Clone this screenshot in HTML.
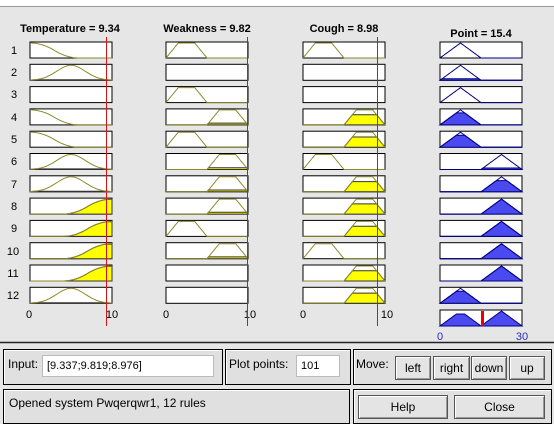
<!DOCTYPE html>
<html><head><meta charset="utf-8"><style>
body{margin:0;width:554px;height:423px;background:#e6e6e6;font-family:"Liberation Sans",Arial,sans-serif;position:relative;overflow:hidden}
.a{position:absolute}
.pan{position:absolute;border:1px solid #000;box-shadow:inset 1px 1px 0 #fff;background:#e0e0e0}
.fld{position:absolute;background:#fff;border:1px solid #bbb;font-size:11px;line-height:21px;padding-left:4px;box-sizing:border-box}
.btn{position:absolute;border:1px solid #555;background:#e4e4e4;box-shadow:inset 1px 1px 0 #fff,inset -1px -1px 0 #999;font-size:12px;text-align:center;box-sizing:border-box}
.lbl{position:absolute;font-size:12px}
</style></head><body>
<div class="a" style="left:0;top:0;width:554px;height:6px;background:#fff;border-bottom:1px solid #999"></div>
<svg id="s" class="a" style="left:0;top:0" width="554" height="345" xmlns="http://www.w3.org/2000/svg" font-family="Liberation Sans, Arial, sans-serif">
<text x="70" y="32" font-size="11" font-weight="bold" text-anchor="middle">Temperature = 9.34</text>
<text x="207" y="32" font-size="11" font-weight="bold" text-anchor="middle">Weakness = 9.82</text>
<text x="344" y="32" font-size="11" font-weight="bold" text-anchor="middle">Cough = 8.98</text>
<text x="481" y="37" font-size="11" font-weight="bold" text-anchor="middle">Point = 15.4</text>
<g font-size="11" text-anchor="middle">
<text x="14" y="54">1</text><text x="14" y="76">2</text><text x="14" y="98">3</text><text x="14" y="121">4</text><text x="14" y="143">5</text><text x="14" y="165">6</text><text x="14" y="188">7</text><text x="14" y="210">8</text><text x="14" y="232">9</text><text x="13" y="255">10</text><text x="13" y="277">11</text><text x="13" y="299">12</text>
<text x="29" y="318">0</text><text x="112" y="318">10</text>
<text x="166" y="318">0</text><text x="250" y="318">10</text>
<text x="303" y="318">0</text><text x="387" y="318">10</text>
<text x="440" y="340" fill="#2b2bbb">0</text><text x="522" y="340" fill="#2b2bbb">30</text>
</g>
<g id="g"></g>
<line x1="0" y1="342.5" x2="554" y2="342.5" stroke="#222" stroke-width="1.5"/>
</svg>
<script>
var g=document.getElementById('g'),h='';
function sm(u,a,b){if(u<=a)return 0;if(u>=b)return 1;var m=(a+b)/2;return u<m?2*Math.pow((u-a)/(b-a),2):1-2*Math.pow((u-b)/(b-a),2);}
var F={A:function(u){return 1-sm(u,0,.6)},B:function(u){return Math.exp(-Math.pow(u-.5,2)/(2*.03))},C:function(u){return sm(u,.4,1)},
D:function(u){return Math.max(0,Math.min((u)/.15,1,(.5-u)/.15))},E:function(u){return Math.max(0,Math.min((u-.5)/.15,1,(1-u)/.15))},
H:function(u){return Math.max(0,Math.min(u/.25,(.5-u)/.25))},K:function(u){return Math.max(0,Math.min((u-.5)/.25,(1-u)/.25))}};
var cols=[{x:30,mf:'ABxAABBCCCCB',f:[0,.04,0,0,0,.04,.04,.97,.97,.97,.97,.04],c:'#8a8a2a',fc:'#ffff00'},
{x:166,mf:'DxDEDEEEDExx',f:[0,0,0,.12,0,.12,.12,.12,0,.12,0,0],c:'#8a8a2a',fc:'#ffff00'},
{x:303,mf:'FxxGGFGGGFGG',f:[0,0,0,.68,.68,0,.68,.68,.68,0,.68,.68],c:'#8a8a2a',fc:'#ffff00'},
{x:440,mf:'HHHHHKKKKKKH',f:[0,.1,0,.8,.8,.1,.75,1,1,.95,1,.8],c:'#000080',fc:'#4a4af0'}];
var W=82,H=16;
function path(fn,x,y,clip){var p='';for(var i=0;i<=100;i++){var u=i/100,v=fn(u);if(clip!=null)v=Math.min(v,clip);p+=(i?'L':'M')+(x+u*W).toFixed(1)+' '+(y+H-v*(H-1)).toFixed(1);}return p;}
function closed(fn,x,y,clip){return path(fn,x,y,clip)+'L'+(x+W)+' '+(y+H)+'L'+x+' '+(y+H)+'Z';}
cols.forEach(function(c){for(var r=0;r<12;r++){var y=42+r*22.3;h+='<rect x="'+c.x+'" y="'+y+'" width="'+W+'" height="'+H+'" fill="#fff" stroke="#000"/>';var k=c.mf[r];if(k=='x')continue;var fn=F[k=='F'?'D':k=='G'?'E':k];
if(c.f[r]>0){h+='<path d="'+closed(fn,c.x,y,c.f[r])+'" fill="'+c.fc+'" stroke="'+(c.x==440?'#000080':'#333')+'" stroke-width="1"/>';}
h+='<path d="'+path(fn,c.x,y)+'" fill="none" stroke="'+c.c+'" stroke-width="1"/>';}});
var y=310;h+='<rect x="440" y="'+y+'" width="'+W+'" height="'+H+'" fill="#fff" stroke="#000"/>';
h+='<path d="'+closed(function(u){return Math.max(Math.min(F.H(u),.8),Math.min(F.K(u),1))},440,y)+'" fill="#4a4af0" stroke="#000080"/>';
h+='<line x1="482.5" y1="'+(y+1)+'" x2="482.5" y2="'+(y+H)+'" stroke="#e00" stroke-width="3"/>';
[106,247,377].forEach(function(x){h+='<rect x="'+x+'" y="37" width="1" height="289" fill="#dd1111"/>';});
g.innerHTML=h;
</script>
<div class="pan" style="left:3px;top:349px;width:218px;height:34px"></div>
<div class="lbl" style="left:8px;top:357px">Input:</div>
<div class="fld" style="left:42px;top:355px;width:172px;height:22px">[9.337;9.819;8.976]</div>
<div class="pan" style="left:225px;top:349px;width:124px;height:34px"></div>
<div class="lbl" style="left:229px;top:357px">Plot points:</div>
<div class="fld" style="left:296px;top:355px;width:44px;height:22px">101</div>
<div class="pan" style="left:353px;top:349px;width:197px;height:34px"></div>
<div class="lbl" style="left:356px;top:357px">Move:</div>
<div class="btn" style="left:395px;top:356px;width:36px;height:24px;line-height:22px">left</div>
<div class="btn" style="left:433px;top:356px;width:37px;height:24px;line-height:22px">right</div>
<div class="btn" style="left:471px;top:356px;width:36px;height:24px;line-height:22px">down</div>
<div class="btn" style="left:509px;top:356px;width:36px;height:24px;line-height:22px">up</div>
<div class="pan" style="left:3px;top:389px;width:345px;height:33px"></div>
<div class="lbl" style="left:9px;top:396px">Opened system Pwqerqwr1, 12 rules</div>
<div class="pan" style="left:353px;top:389px;width:197px;height:33px"></div>
<div class="btn" style="left:358px;top:395px;width:90px;height:24px;line-height:22px">Help</div>
<div class="btn" style="left:454px;top:395px;width:91px;height:24px;line-height:22px">Close</div>
</body></html>
